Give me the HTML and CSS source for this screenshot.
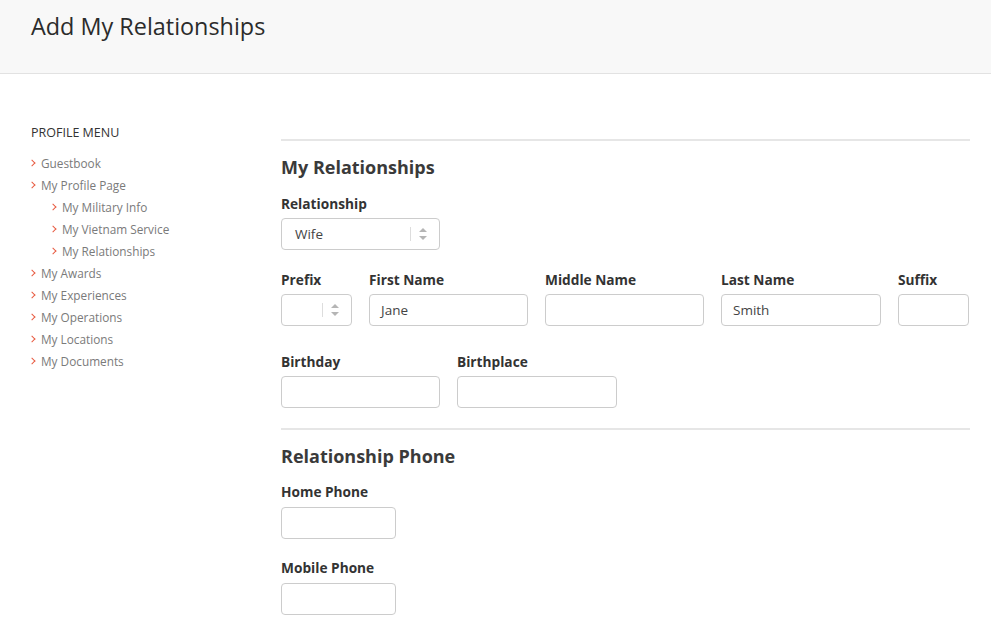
FILE: index.html
```html
<!DOCTYPE html>
<html>
<head>
<meta charset="utf-8">
<link rel="stylesheet" href="styles.css">
</head>
<body>
<header class="header">
  <h1 class="title">Add My Relationships</h1>
</header>
<div class="layout">
  <aside class="sidebar">
    <div class="menu-title">PROFILE MENU</div>
    <ul class="menu">
      <li><span class="chev"></span>Guestbook</li>
      <li><span class="chev"></span>My Profile Page</li>
      <li class="sub"><span class="chev"></span>My Military Info</li>
      <li class="sub"><span class="chev"></span>My Vietnam Service</li>
      <li class="sub"><span class="chev"></span>My Relationships</li>
      <li><span class="chev"></span>My Awards</li>
      <li><span class="chev"></span>My Experiences</li>
      <li><span class="chev"></span>My Operations</li>
      <li><span class="chev"></span>My Locations</li>
      <li><span class="chev"></span>My Documents</li>
    </ul>
  </aside>
  <main class="main">
    <hr class="rule first">
    <h2 class="section-title">My Relationships</h2>
    <div class="field">
      <label class="label">Relationship</label>
      <div class="select w159"><span class="val">Wife</span><span class="sep"></span><span class="arrows"></span></div>
    </div>
    <div class="row row-names">
      <div class="field">
        <label class="label">Prefix</label>
        <div class="select w71"><span class="val"></span><span class="sep"></span><span class="arrows"></span></div>
      </div>
      <div class="field">
        <label class="label">First Name</label>
        <div class="input w159">Jane</div>
      </div>
      <div class="field">
        <label class="label">Middle Name</label>
        <div class="input w159"></div>
      </div>
      <div class="field">
        <label class="label">Last Name</label>
        <div class="input w160">Smith</div>
      </div>
      <div class="field">
        <label class="label">Suffix</label>
        <div class="input w71"></div>
      </div>
    </div>
    <div class="row row-birth">
      <div class="field">
        <label class="label">Birthday</label>
        <div class="input w159"></div>
      </div>
      <div class="field">
        <label class="label">Birthplace</label>
        <div class="input w160"></div>
      </div>
    </div>
    <hr class="rule second">
    <h2 class="section-title phone-title">Relationship Phone</h2>
    <div class="field phone">
      <label class="label">Home Phone</label>
      <div class="input w115"></div>
    </div>
    <div class="field phone second-phone">
      <label class="label">Mobile Phone</label>
      <div class="input w115"></div>
    </div>
  </main>
</div>
</body>
</html>
```

FILE: styles.css
```css
* { box-sizing: border-box; }
body {
  margin: 0;
  font-family: "Open Sans", "Noto Sans", sans-serif;
  color: #333;
  background: #fff;
}
.header {
  height: 74px;
  background: #f8f8f8;
  border-bottom: 1px solid #e2e2e2;
  padding: 10px 31px 0;
}
.title {
  margin: 0;
  font-size: 23.4px;
  font-weight: 400;
  line-height: 32px;
  color: #2b2b2b;
}
.layout {
  display: flex;
  padding: 0 21px 0 31px;
}
.sidebar {
  width: 250px;
  flex: none;
  padding-top: 50px;
}
.menu-title {
  font-size: 12.5px;
  line-height: 18px;
  color: #333;
}
.menu {
  list-style: none;
  margin: 10px 0 0;
  padding: 0;
}
.menu li {
  font-size: 11.8px;
  line-height: 22px;
  color: #7a7a7a;
  display: flex;
  align-items: center;
}
.menu li.sub { padding-left: 21px; }
.chev {
  width: 4px;
  height: 7px;
  margin: 0 6px 0 0;
  position: relative;
  top: -1px;
}
.chev::before {
  content: "";
  display: block;
  width: 4px;
  height: 4px;
  border-right: 1.2px solid #e85a40;
  border-top: 1.2px solid #e85a40;
  transform: translate(-1.5px, 1.5px) rotate(45deg);
}
.main {
  flex: 1;
  padding-top: 65px;
}
.rule {
  margin: 0;
  border: 0;
  border-top: 2px solid #e6e6e6;
  height: 0;
}
.rule.second { margin-top: 20px; }
.section-title {
  margin: 14px 0 15px;
  font-size: 18px;
  line-height: 24px;
  font-weight: 700;
  color: #3a3a3a;
}
.phone-title { margin: 14px 0 14px; }
.field { display: flex; flex-direction: column; }
.label {
  font-size: 13.7px;
  font-weight: 700;
  line-height: 20px;
  color: #333;
  margin-bottom: 4px;
}
.phone .label { margin-bottom: 5px; }
.row { display: flex; }
.row-names { margin-top: 20px; gap: 17px; }
.row-birth { margin-top: 26px; gap: 17px; }
.second-phone { margin-top: 19px; }
.input, .select {
  height: 32px;
  border: 1px solid #ccc;
  border-radius: 4px;
  font-size: 13.5px;
  line-height: 30px;
  padding: 0 11px;
  color: #444;
  background: #fff;
}
.select {
  display: flex;
  align-items: center;
  padding: 0 8px 0 13px;
}
.select .val { flex: 1; }
.select .sep {
  width: 1px;
  height: 14px;
  background: #ddd;
  margin-right: 8px;
}
.select .arrows {
  width: 8px;
  height: 12px;
  position: relative;
  margin-right: 4px;
}
.select .arrows::before, .select .arrows::after {
  content: "";
  position: absolute;
  left: 0;
  border-left: 4px solid transparent;
  border-right: 4px solid transparent;
}
.select .arrows::before { top: 0; border-bottom: 4px solid #b5b5b5; }
.select .arrows::after { bottom: 0; border-top: 4px solid #b5b5b5; }
.w71 { width: 71px; }
.w115 { width: 115px; }
.w159 { width: 159px; }
.w160 { width: 160px; }
```
